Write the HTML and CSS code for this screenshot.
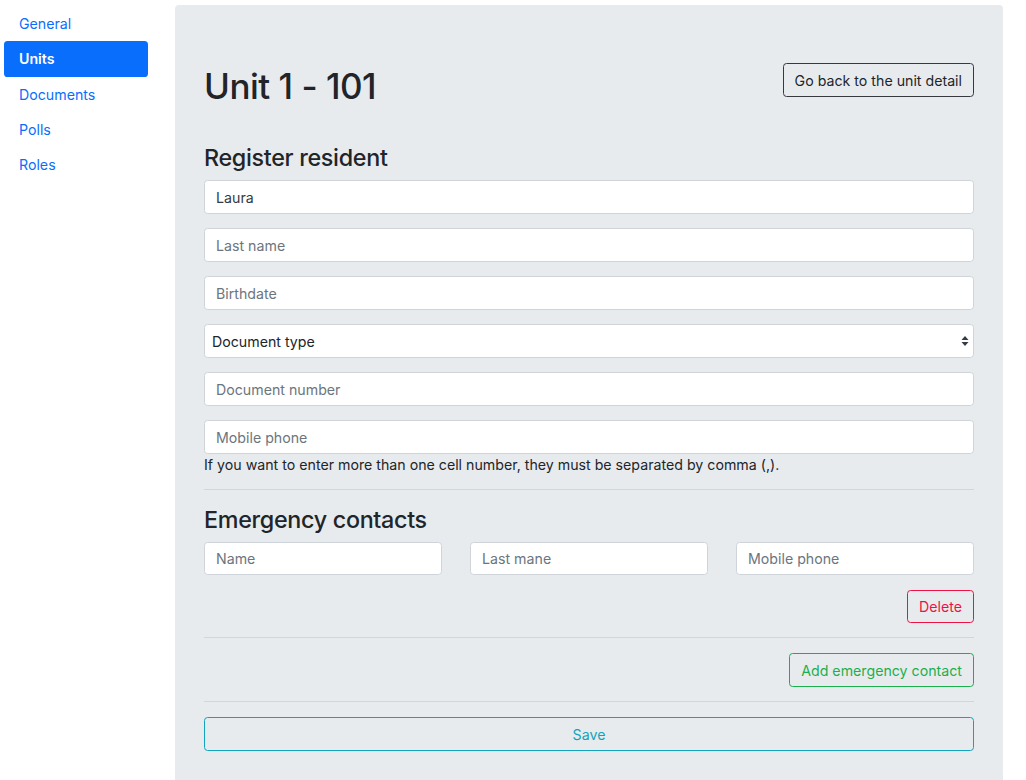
FILE: index.html
```html
<!DOCTYPE html>
<html lang="en">
<head>
<meta charset="utf-8">
<title>Unit 1 - 101</title>
<link rel="stylesheet" href="styles.css">
</head>
<body>
<div class="layout">
  <aside class="sidebar">
    <nav class="nav">
      <a class="nav-link" href="#">General</a>
      <a class="nav-link active" href="#">Units</a>
      <a class="nav-link" href="#">Documents</a>
      <a class="nav-link" href="#">Polls</a>
      <a class="nav-link" href="#">Roles</a>
    </nav>
  </aside>
  <main class="panel">
    <div class="page-header">
      <h1 class="title">Unit 1 - 101</h1>
      <button class="btn btn-dark-outline">Go back to the unit detail</button>
    </div>
    <h3 class="section-title">Register resident</h3>
    <form class="form">
      <input class="field field-value" type="text" value="Laura">
      <input class="field" type="text" placeholder="Last name">
      <input class="field" type="text" placeholder="Birthdate">
      <div class="select-wrap">
        <select class="field field-select">
          <option>Document type</option>
        </select>
        <svg class="select-arrows" width="8" height="12" viewBox="0 0 8 12"><path d="M4 1 L7.5 5 H0.5 Z M4 11 L7.5 7 H0.5 Z" fill="#343a40"/></svg>
      </div>
      <input class="field" type="text" placeholder="Document number">
      <div class="field-group">
        <input class="field" type="text" placeholder="Mobile phone">
        <p class="help">If you want to enter more than one cell number, they must be separated by comma (,).</p>
      </div>
    </form>
    <hr class="divider">
    <h3 class="section-title">Emergency contacts</h3>
    <div class="contact-row">
      <input class="field" type="text" placeholder="Name">
      <input class="field" type="text" placeholder="Last mane">
      <input class="field" type="text" placeholder="Mobile phone">
    </div>
    <div class="actions">
      <button class="btn btn-danger-outline">Delete</button>
    </div>
    <hr class="divider">
    <div class="actions actions-tight">
      <button class="btn btn-success-outline">Add emergency contact</button>
    </div>
    <hr class="divider">
    <button class="btn btn-info-outline btn-block">Save</button>
  </main>
</div>
</body>
</html>
```

FILE: styles.css
```css
* { box-sizing: border-box; }

html, body {
  margin: 0;
  padding: 0;
  background: #ffffff;
  font-family: Inter, "Noto Sans", Roboto, sans-serif;
  font-size: 14.2px;
  line-height: 1.5;
  color: #212529;
}

.layout {
  display: flex;
  align-items: flex-start;
  height: 780px;
  overflow: hidden;
}

.sidebar {
  width: 175px;
  flex: none;
  padding: 6px 27px 0 4px;
}

.nav {
  display: flex;
  flex-direction: column;
}

.nav-link {
  display: block;
  height: 35.3px;
  padding: 6px 15px;
  line-height: 23px;
  font-size: 14.2px;
  color: #0a6efd;
  text-decoration: none;
  border-radius: 3.6px;
}

.nav-link.active {
  background: #0a6efd;
  color: #ffffff;
  font-weight: 600;
}

.panel {
  width: 828px;
  flex: none;
  margin-top: 5px;
  min-height: 820px;
  background: #e8ebee;
  border-radius: 4px;
  padding: 58px 29px 40px;
}

.page-header {
  display: flex;
  justify-content: space-between;
  align-items: flex-start;
  margin-bottom: 34px;
}

.title {
  margin: 0;
  font-size: 35px;
  font-weight: 500;
  line-height: 46px;
  letter-spacing: -0.5px;
}

.section-title {
  margin: 0 0 7px;
  font-size: 23.3px;
  font-weight: 500;
  line-height: 30px;
  letter-spacing: -0.3px;
}

.btn {
  font-family: inherit;
  font-size: 14.2px;
  line-height: 21px;
  padding: 5px 11px;
  border-radius: 3.6px;
  background: transparent;
  cursor: pointer;
}

.btn-dark-outline {
  border: 1px solid #343a40;
  color: #212529;
  height: 34px;
}

.btn-danger-outline {
  border: 1px solid #ee1144;
  color: #ee1144;
  height: 33px;
}

.btn-success-outline {
  border: 1px solid #1caf4d;
  color: #1caf4d;
  height: 34px;
}

.btn-info-outline {
  border: 1px solid #12a3bd;
  color: #12a3bd;
  height: 34px;
}

.btn-block {
  display: block;
  width: 100%;
}

.form {
  display: flex;
  flex-direction: column;
  gap: 14px;
}

.field {
  display: block;
  width: 100%;
  height: 34px;
  padding: 5px 11px;
  font-family: inherit;
  font-size: 14.2px;
  line-height: 21px;
  color: #495057;
  background: #ffffff;
  border: 1px solid #ced4da;
  border-radius: 3.6px;
  outline: none;
}

.field::placeholder {
  color: #6c757d;
  opacity: 1;
}

.field-value {
  color: #343a40;
}

.select-wrap {
  position: relative;
}

.field-select {
  appearance: none;
  -webkit-appearance: none;
  padding-left: 7px;
  color: #212529;
}

.select-arrows {
  position: absolute;
  right: 5px;
  top: 11px;
}

.field-group .help {
  margin: 0;
  font-size: 14.2px;
  line-height: 21px;
  color: #212529;
}

.divider {
  border: 0;
  border-top: 1px solid #d3d6d9;
  margin: 14px 0 15px;
}

.contact-row {
  display: grid;
  grid-template-columns: repeat(3, 1fr);
  column-gap: 28px;
}

.contact-row .field {
  height: 33px;
}

.actions {
  display: flex;
  justify-content: flex-end;
  margin-top: 15px;
}

.actions-tight {
  margin-top: 0;
}
```
